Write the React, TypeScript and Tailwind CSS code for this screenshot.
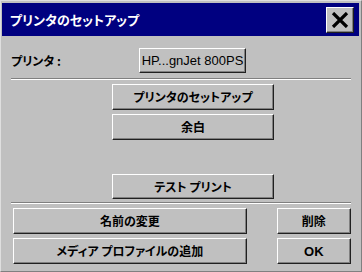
const JP = "font-['Noto_Sans_CJK_JP','Noto_Sans',sans-serif] [font-feature-settings:'palt']";

const BEVEL =
  "bg-[#c0c0c0] border border-t-white border-l-white border-r-[#202020] border-b-[#202020] shadow-[inset_-1px_-1px_0_#808080] flex items-center justify-center text-black";

function Btn({ label, className = "" }: { label: string; className?: string }) {
  return (
    <div className={`${BEVEL} ${JP} text-[12px] font-bold leading-none ${className}`}>
      {label}
    </div>
  );
}

function Separator() {
  return <div className="h-[2px] border-t border-t-[#808080] border-b border-b-white" />;
}

export default function App() {
  return (
    <div className="w-[362px] h-[272px] bg-[#c0c0c0] border border-t-[#dfdfdf] border-l-[#dfdfdf] border-r-[#808080] border-b-[#808080] pt-[2px] pl-[1px] pr-[2px] overflow-hidden">
      {/* title bar */}
      <div className="h-[33px] bg-[#000080] flex items-center justify-between pl-[8px] pr-[5px]">
        <span className={`${JP} text-[13px] font-bold text-white leading-none`}>
          プリンタのセットアップ
        </span>
        <div className={`${BEVEL} w-[28px] h-[26px]`}>
          <svg width="18" height="16" viewBox="0 0 18 16">
            <path d="M2 1 L16 15 M16 1 L2 15" stroke="#000" strokeWidth="3.2" />
          </svg>
        </div>
      </div>

      <div className="pl-[9px] pr-[8px]">
        {/* printer row */}
        <div className="mt-[12px] h-[25px] flex items-center">
          <span className={`${JP} w-[128px] text-[12px] font-bold text-black leading-none`}>
            プリンタ :
          </span>
          <div
            className={`${BEVEL} w-[107px] h-[25px] font-['Liberation_Sans',Arial,sans-serif] text-[13px] leading-none`}
          >
            HP...gnJet 800PS
          </div>
        </div>

        <div className="mt-[5px]">
          <Separator />
        </div>

        <div className="ml-[101px] w-[162px] flex flex-col">
          <Btn label="プリンタのセットアップ" className="mt-[4px] h-[26px]" />
          <Btn label="余白" className="mt-[4px] h-[26px]" />
          <Btn label="テスト プリント" className="mt-[34px] h-[25px]" />
        </div>

        <div className="mt-[3px]">
          <Separator />
        </div>

        <div className="mt-[4px] ml-[2px] flex gap-[30px]">
          <div className="w-[236px] flex flex-col gap-[4px]">
            <Btn label="名前の変更" className="h-[26px]" />
            <Btn label="メディア プロファイルの追加" className="h-[26px]" />
          </div>
          <div className="w-[75px] flex flex-col gap-[4px]">
            <Btn label="削除" className="h-[26px]" />
            <div className={`${BEVEL} h-[26px] font-['Liberation_Sans',Arial,sans-serif] text-[13px] font-bold leading-none`}>
              OK
            </div>
          </div>
        </div>
      </div>
    </div>
  );
}
